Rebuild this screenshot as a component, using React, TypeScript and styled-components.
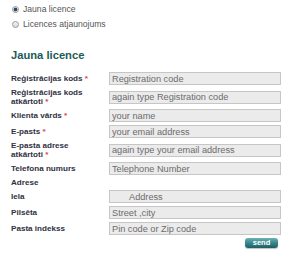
import React from "react";
import styled, { createGlobalStyle } from "styled-components";

const Global = createGlobalStyle`
  html, body { margin: 0; padding: 0; background: #ffffff; }
  body { font-family: "Liberation Sans", Arial, sans-serif; }
`;

const Page = styled.div`
  width: 300px;
  height: 264px;
  box-sizing: border-box;
  padding: 3px 0 0 11px;
  display: flex;
  flex-direction: column;
`;

const RadioGroup = styled.div`
  display: flex;
  flex-direction: column;
  gap: 3px;
`;

const RadioRow = styled.label`
  display: flex;
  align-items: center;
  gap: 4px;
  height: 12px;
  font-size: 8.6px;
  color: #555;
  padding-left: 1px;
`;

const RadioDot = styled.span<{ $checked?: boolean }>`
  width: 7px;
  height: 7px;
  box-sizing: border-box;
  border-radius: 50%;
  border: 1px solid #9a9a9a;
  background: ${(p) =>
    p.$checked
      ? "radial-gradient(circle, #2c4a6a 0, #2c4a6a 1.6px, #e8e8e8 2.2px)"
      : "linear-gradient(#f4f4f4, #d8d8d8)"};
`;

const Heading = styled.h2`
  margin: 19px 0 0 0;
  font-size: 11.2px;
  line-height: 12px;
  font-weight: bold;
  color: #1c5b58;
`;

const Form = styled.form`
  margin-top: 11px;
  display: flex;
  flex-direction: column;
  gap: 3px;
`;

const Row = styled.div<{ $h?: number }>`
  display: grid;
  grid-template-columns: 98px 172px;
  align-items: center;
  height: ${(p) => p.$h ?? 13}px;
`;

const Label = styled.span`
  font-size: 8.1px;
  line-height: 9px;
  font-weight: bold;
  color: #2f3142;
`;

const Star = styled.span`
  color: #e0464a;
`;

const Input = styled.input<{ $indent?: number }>`
  box-sizing: border-box;
  width: 172px;
  height: 13px;
  margin: 0;
  padding: 0 0 0 2px;
  text-indent: ${(p) => p.$indent ?? 0}px;
  border: 1px solid #c6c6c6;
  background: #ebebeb;
  font-family: "Liberation Sans", Arial, sans-serif;
  font-size: 9.2px;
  color: #666;
  outline: none;
  &::placeholder {
    color: #6c6c6c;
    opacity: 1;
  }
`;

const Actions = styled.div`
  display: flex;
  justify-content: flex-end;
  width: 267px;
`;

const SendButton = styled.button`
  width: 33px;
  height: 10px;
  padding: 0;
  border: none;
  border-radius: 3px;
  background: linear-gradient(#6fb2b6 0%, #3b8a90 45%, #1d5d64 100%);
  box-shadow: 0 1px 1px rgba(0, 0, 0, 0.25);
  color: #ffffff;
  font-family: "Liberation Sans", Arial, sans-serif;
  font-weight: bold;
  font-size: 7.5px;
  line-height: 10px;
`;

const fields: { label: string[]; req?: boolean; ph?: string; h?: number; indent?: number }[] = [
  { label: ["Reģistrācijas kods"], req: true, ph: "Registration code" },
  { label: ["Reģistrācijas kods", "atkārtoti"], req: true, ph: "again type Registration code", h: 18 },
  { label: ["Klienta vārds"], req: true, ph: "your name" },
  { label: ["E-pasts"], req: true, ph: "your email address" },
  { label: ["E-pasta adrese", "atkārtoti"], req: true, ph: "again type your email address", h: 18 },
  { label: ["Telefona numurs"], ph: "Telephone Number" },
  { label: ["Adrese"], h: 9 },
  { label: ["Iela"], ph: "Address", indent: 17 },
  { label: ["Pilsēta"], ph: "Street ,city" },
  { label: ["Pasta indekss"], ph: "Pin code or Zip code" },
];

export default function App() {
  return (
    <Page>
      <Global />
      <RadioGroup>
        <RadioRow>
          <RadioDot $checked />
          Jauna licence
        </RadioRow>
        <RadioRow>
          <RadioDot />
          Licences atjaunojums
        </RadioRow>
      </RadioGroup>
      <Heading>Jauna licence</Heading>
      <Form onSubmit={(e) => e.preventDefault()}>
        {fields.map((f, i) => (
          <Row key={i} $h={f.h}>
            <Label>
              {f.label.map((l, j) => (
                <React.Fragment key={j}>
                  {j > 0 && <br />}
                  {l}
                  {f.req && j === f.label.length - 1 && <Star> *</Star>}
                </React.Fragment>
              ))}
            </Label>
            {f.ph !== undefined && <Input placeholder={f.ph} $indent={f.indent} />}
          </Row>
        ))}
        <Actions>
          <SendButton type="submit">send</SendButton>
        </Actions>
      </Form>
    </Page>
  );
}
